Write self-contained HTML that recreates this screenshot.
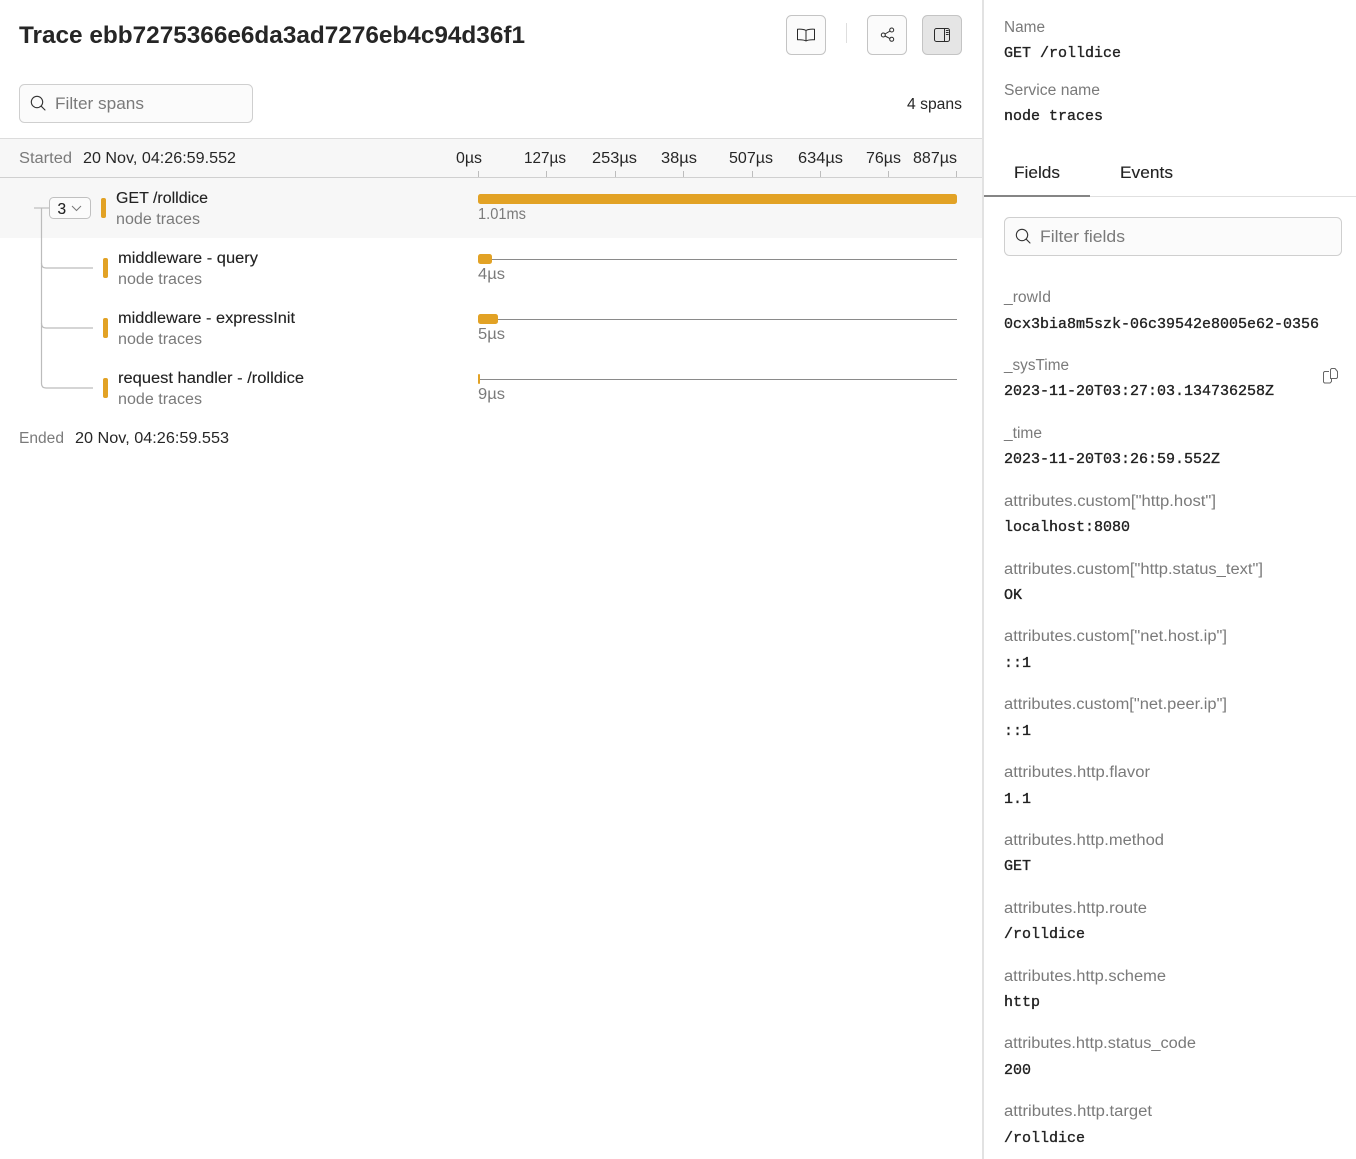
<!DOCTYPE html>
<html lang="en">
<head>
<meta charset="utf-8">
<title>Trace</title>
<style>
html,body{margin:0;padding:0;background:#fff;width:1356px;height:1159px;overflow:hidden}
svg{display:block}
text{font-family:"Liberation Sans",sans-serif;font-size:15.5px;fill:#262626;white-space:pre}
.g{fill:#7a7a7a}
.m{font-family:"Liberation Mono",monospace;font-size:15px;fill:#222;stroke:#222;stroke-width:.35}
.s{fill:#222;stroke:#222;stroke-width:.12}
.i{fill:none;stroke:#2a2a2a;stroke-width:1;stroke-linecap:round;stroke-linejoin:round}
</style>
</head>
<body>
<svg width="1356" height="1159" viewBox="0 0 1356 1159" xmlns="http://www.w3.org/2000/svg">
<rect width="1356" height="1159" fill="#fff"/>
<rect x="0" y="138" width="982" height="40" fill="#f7f7f7"/>
<rect x="0" y="138" width="982" height="1" fill="#dcdcdc"/>
<rect x="0" y="177" width="982" height="1" fill="#d0d0d0"/>
<rect x="0" y="178" width="982" height="60" fill="#f7f7f7"/>
<rect x="982" y="0" width="2" height="1159" fill="#e2e2e2"/>

<text x="19" y="43" textLength="506" lengthAdjust="spacingAndGlyphs" style="font-size:24px;font-weight:700;fill:#262626">Trace ebb7275366e6da3ad7276eb4c94d36f1</text>

<rect x="786.500" y="15.500" width="39" height="39" rx="5" fill="#fbfbfb" stroke="#c4c4c4"/>
<path class="i" d="M806 30.500c-2-1.300-5-1.500-8.500-1.300v10.600c3.500-.2 6.500 0 8.500 1.200 2-1.200 5-1.400 8.500-1.200V29.200c-3.500-.2-6.500 0-8.500 1.300zM806 30.500v9.500"/>
<rect x="846" y="23" width="1" height="20" fill="#dedede"/>
<rect x="867.500" y="15.500" width="39" height="39" rx="5" fill="#fbfbfb" stroke="#c4c4c4"/>
<g class="i"><circle cx="883.300" cy="35" r="2"/><circle cx="891.700" cy="30" r="2"/><circle cx="891.700" cy="39.300" r="2"/><path d="M885 34l5-3M885 36l5 2.500"/></g>
<rect x="922.500" y="15.500" width="39" height="39" rx="5" fill="#e5e5e5" stroke="#c4c4c4"/>
<g class="i"><rect x="934.500" y="28.500" width="15" height="13" rx="2"/><path d="M944.500 28.500v13M946.300 30.500h2M946.300 32.500h2M946.300 34.500h2"/></g>

<rect x="19.500" y="84.500" width="233" height="38" rx="5" fill="#fbfbfb" stroke="#cfcfcf"/>
<g fill="none" stroke="#333" stroke-width="1.100" stroke-linecap="round"><circle cx="37" cy="102" r="5.700"/><path d="M41.200 106.200l3.800 3.800"/></g>
<text x="55" y="109" textLength="89" lengthAdjust="spacingAndGlyphs" style="font-size:16.500px" class="g">Filter spans</text>
<text x="907" y="109" textLength="55" lengthAdjust="spacingAndGlyphs">4 spans</text>

<text x="19" y="163" textLength="53" lengthAdjust="spacingAndGlyphs" class="g">Started</text>
<text x="83" y="163" textLength="153" lengthAdjust="spacingAndGlyphs">20 Nov, 04:26:59.552</text>
<text x="456" y="163" textLength="26" lengthAdjust="spacingAndGlyphs">0µs</text>
<text x="524" y="163" textLength="42" lengthAdjust="spacingAndGlyphs">127µs</text>
<text x="592" y="163" textLength="45" lengthAdjust="spacingAndGlyphs">253µs</text>
<text x="661" y="163" textLength="36" lengthAdjust="spacingAndGlyphs">38µs</text>
<text x="729" y="163" textLength="44" lengthAdjust="spacingAndGlyphs">507µs</text>
<text x="798" y="163" textLength="45" lengthAdjust="spacingAndGlyphs">634µs</text>
<text x="866" y="163" textLength="35" lengthAdjust="spacingAndGlyphs">76µs</text>
<text x="913" y="163" textLength="44" lengthAdjust="spacingAndGlyphs">887µs</text>
<g fill="#bdbdbd">
<rect x="478" y="171" width="1" height="6"/><rect x="546" y="171" width="1" height="6"/><rect x="615" y="171" width="1" height="6"/><rect x="683" y="171" width="1" height="6"/><rect x="752" y="171" width="1" height="6"/><rect x="820" y="171" width="1" height="6"/><rect x="888" y="171" width="1" height="6"/><rect x="956" y="171" width="1" height="6"/>
</g>

<g fill="none" stroke="#bcbcbc" stroke-width="1.200">
<path d="M34 208H49"/>
<path d="M41.500 208V263.500q0 4.500 4.500 4.500H93"/>
<path d="M41.500 263V323.500q0 4.500 4.500 4.500H93"/>
<path d="M41.500 323V383.500q0 4.500 4.500 4.500H93"/>
</g>
<rect x="49.500" y="197.500" width="41" height="21" rx="4" fill="#fbfbfb" stroke="#c0c0c0"/>
<text x="57.500" y="214" style="font-size:15.500px" class="s">3</text>
<path d="M72 206l4.500 4.500 4.500-4.500" fill="none" stroke="#777" stroke-width="1"/>

<g fill="#e2a225">
<rect x="101" y="198" width="5" height="20" rx="2"/>
<rect x="103" y="258" width="5" height="20" rx="2"/>
<rect x="103" y="318" width="5" height="20" rx="2"/>
<rect x="103" y="378" width="5" height="20" rx="2"/>
<rect x="478" y="194" width="479" height="10" rx="2.500"/>
<rect x="478" y="254" width="14" height="10" rx="2.500"/>
<rect x="478" y="314" width="20" height="10" rx="2.500"/>
<rect x="478" y="374" width="2" height="10" rx="1"/>
</g>
<g fill="#8a8a8a">
<rect x="492" y="259" width="465" height="1"/>
<rect x="498" y="319" width="459" height="1"/>
<rect x="480" y="379" width="477" height="1"/>
</g>

<text x="116" y="203" textLength="92" lengthAdjust="spacingAndGlyphs" class="s">GET /rolldice</text>
<text x="116" y="224" textLength="84" lengthAdjust="spacingAndGlyphs" class="g">node traces</text>
<text x="478" y="219" textLength="48" lengthAdjust="spacingAndGlyphs" class="g">1.01ms</text>

<text x="118" y="263" textLength="140" lengthAdjust="spacingAndGlyphs" class="s">middleware - query</text>
<text x="118" y="284" textLength="84" lengthAdjust="spacingAndGlyphs" class="g">node traces</text>
<text x="478" y="279" textLength="27" lengthAdjust="spacingAndGlyphs" class="g">4µs</text>

<text x="118" y="323" textLength="177" lengthAdjust="spacingAndGlyphs" class="s">middleware - expressInit</text>
<text x="118" y="344" textLength="84" lengthAdjust="spacingAndGlyphs" class="g">node traces</text>
<text x="478" y="339" textLength="27" lengthAdjust="spacingAndGlyphs" class="g">5µs</text>

<text x="118" y="383" textLength="186" lengthAdjust="spacingAndGlyphs" class="s">request handler - /rolldice</text>
<text x="118" y="404" textLength="84" lengthAdjust="spacingAndGlyphs" class="g">node traces</text>
<text x="478" y="399" textLength="27" lengthAdjust="spacingAndGlyphs" class="g">9µs</text>

<text x="19" y="443" textLength="45" lengthAdjust="spacingAndGlyphs" class="g">Ended</text>
<text x="75" y="443" textLength="154" lengthAdjust="spacingAndGlyphs">20 Nov, 04:26:59.553</text>

<text x="1004" y="32" textLength="41" lengthAdjust="spacingAndGlyphs" class="g">Name</text>
<text x="1004" y="57" class="m">GET /rolldice</text>
<text x="1004" y="95" textLength="96" lengthAdjust="spacingAndGlyphs" class="g">Service name</text>
<text x="1004" y="120" class="m">node traces</text>

<rect x="984" y="196" width="372" height="1" fill="#e0e0e0"/>
<rect x="984" y="195" width="106" height="2" fill="#858585"/>
<text x="1014" y="178" textLength="46" lengthAdjust="spacingAndGlyphs" style="font-size:16.500px" class="s">Fields</text>
<text x="1120" y="178" textLength="53" lengthAdjust="spacingAndGlyphs" style="font-size:16.500px" class="s">Events</text>

<rect x="1004.500" y="217.500" width="337" height="38" rx="5" fill="#fbfbfb" stroke="#cfcfcf"/>
<g fill="none" stroke="#333" stroke-width="1.100" stroke-linecap="round"><circle cx="1022" cy="235" r="5.700"/><path d="M1026.200 239.200l3.800 3.800"/></g>
<text x="1040" y="242" textLength="85" lengthAdjust="spacingAndGlyphs" style="font-size:16.500px" class="g">Filter fields</text>

<text x="1004" y="302" textLength="47" lengthAdjust="spacingAndGlyphs" class="g">_rowId</text>
<text x="1004" y="328" class="m">0cx3bia8m5szk-06c39542e8005e62-0356</text>
<text x="1004" y="370" textLength="65" lengthAdjust="spacingAndGlyphs" class="g">_sysTime</text>
<text x="1004" y="395" class="m">2023-11-20T03:27:03.134736258Z</text>
<path d="M1330.500 378.500V369.500l1-1h3.500l2.500 3v6l-1 1zM1329 371.500h-4.500l-1 1v9.500l1 1h5.500l1.500-1.500v-3" fill="none" stroke="#666" stroke-width="1" stroke-linejoin="round"/>
<text x="1004" y="438" textLength="38" lengthAdjust="spacingAndGlyphs" class="g">_time</text>
<text x="1004" y="463" class="m">2023-11-20T03:26:59.552Z</text>
<text x="1004" y="506" textLength="212" lengthAdjust="spacingAndGlyphs" class="g">attributes.custom["http.host"]</text>
<text x="1004" y="531" class="m">localhost:8080</text>
<text x="1004" y="574" textLength="259" lengthAdjust="spacingAndGlyphs" class="g">attributes.custom["http.status_text"]</text>
<text x="1004" y="599" class="m">OK</text>
<text x="1004" y="641" textLength="223" lengthAdjust="spacingAndGlyphs" class="g">attributes.custom["net.host.ip"]</text>
<text x="1004" y="667" class="m">::1</text>
<text x="1004" y="709" textLength="223" lengthAdjust="spacingAndGlyphs" class="g">attributes.custom["net.peer.ip"]</text>
<text x="1004" y="735" class="m">::1</text>
<text x="1004" y="777" textLength="146" lengthAdjust="spacingAndGlyphs" class="g">attributes.http.flavor</text>
<text x="1004" y="803" class="m">1.1</text>
<text x="1004" y="845" textLength="160" lengthAdjust="spacingAndGlyphs" class="g">attributes.http.method</text>
<text x="1004" y="870" class="m">GET</text>
<text x="1004" y="913" textLength="143" lengthAdjust="spacingAndGlyphs" class="g">attributes.http.route</text>
<text x="1004" y="938" class="m">/rolldice</text>
<text x="1004" y="981" textLength="162" lengthAdjust="spacingAndGlyphs" class="g">attributes.http.scheme</text>
<text x="1004" y="1006" class="m">http</text>
<text x="1004" y="1048" textLength="192" lengthAdjust="spacingAndGlyphs" class="g">attributes.http.status_code</text>
<text x="1004" y="1074" class="m">200</text>
<text x="1004" y="1116" textLength="148" lengthAdjust="spacingAndGlyphs" class="g">attributes.http.target</text>
<text x="1004" y="1142" class="m">/rolldice</text>
</svg>
</body>
</html>
